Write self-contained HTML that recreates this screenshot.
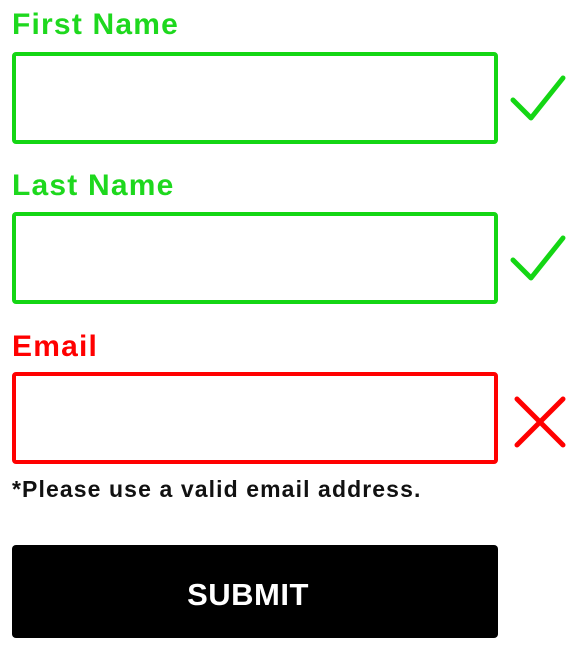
<!DOCTYPE html>
<html><head><style>
body{margin:0;background:#fff;width:585px;height:657px;position:relative;font-family:"Liberation Sans",sans-serif;overflow:hidden}
.l{position:absolute;left:12px;font-size:30px;line-height:32px;font-weight:bold;letter-spacing:1.2px}
.g{color:#1ed81e}.r{color:#f00}
.b{position:absolute;left:12px;width:478px;height:84px;border:4px solid;border-radius:4px;box-sizing:content-box}
.bg{border-color:#14d614}.br{border-color:#f00}
svg{position:absolute}
</style></head><body>
<div class="l g" style="top:9px">First Name</div>
<div class="b bg" style="top:52px"></div>
<svg style="left:505px;top:72px" width="66" height="56"><path d="M8 28 L26 46 L58 6" fill="none" stroke="#14d614" stroke-width="5" stroke-linecap="round" stroke-linejoin="round"/></svg>
<div class="l g" style="top:170px">Last Name</div>
<div class="b bg" style="top:212px"></div>
<svg style="left:505px;top:232px" width="66" height="56"><path d="M8 28 L26 46 L58 6" fill="none" stroke="#14d614" stroke-width="5" stroke-linecap="round" stroke-linejoin="round"/></svg>
<div class="l r" style="top:331px">Email</div>
<div class="b br" style="top:372px"></div>
<svg style="left:510px;top:392px" width="60" height="60"><path d="M7 7 L53 53 M53 7 L7 53" fill="none" stroke="#f00" stroke-width="5" stroke-linecap="round"/></svg>
<div style="position:absolute;left:12px;top:476px;font-size:23px;color:#111;letter-spacing:1.1px;font-weight:bold">*Please use a valid email address.</div>
<div style="position:absolute;left:12px;top:545px;width:486px;height:93px;background:#000;border-radius:4px;color:#fff;font-size:31px;font-weight:bold;line-height:100px;text-align:center;text-indent:-14px;letter-spacing:0.5px">SUBMIT</div>
</body></html>
